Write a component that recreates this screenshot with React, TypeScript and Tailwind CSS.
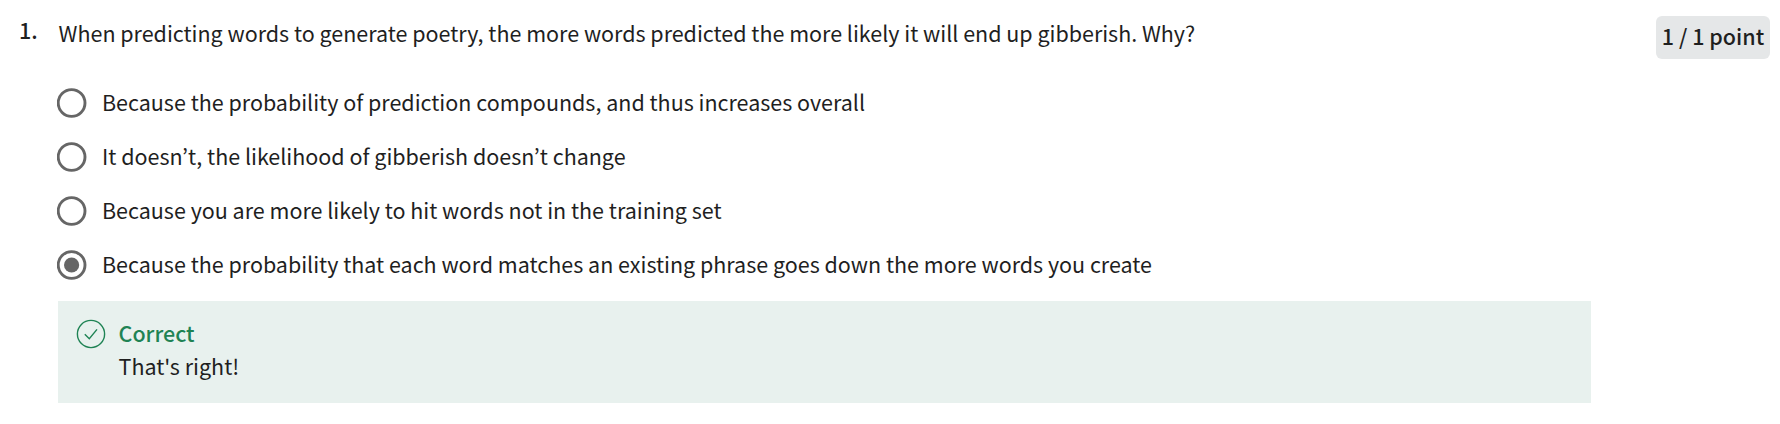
const options = [
  { text: 'Because the probability of prediction compounds, and thus increases overall' },
  { text: 'It doesn’t, the likelihood of gibberish doesn’t change' },
  { text: 'Because you are more likely to hit words not in the training set' },
  {
    text: 'Because the probability that each word matches an existing phrase goes down the more words you create',
    checked: true,
  },
];

function Radio({ checked }: { checked?: boolean }) {
  return (
    <svg viewBox="0 0 30 30" className="size-[30px] shrink-0" fill="none">
      <circle cx="14.6" cy="15" r="13.4" stroke="#666" strokeWidth="2.9" />
      {checked && <circle cx="14.6" cy="15" r="7.6" fill="#666" />}
    </svg>
  );
}

export default function App() {
  return (
    <main className="flex h-[424px] w-[1780px] items-start overflow-hidden bg-white font-['Noto_Sans_CJK_JP','Noto_Sans_CJK_SC',sans-serif] text-[21.5px] leading-[32px] whitespace-nowrap text-[#1f1f1f]">
      <div className="w-[58px] shrink-0 pt-[14px] pl-[19px] font-medium">1.</div>
      <div className="w-[1533px] shrink-0">
        <p className="pt-[17px] pl-[0.6px] tracking-[-0.014px]">
          When predicting words to generate poetry, the more words predicted the more likely it will end up gibberish. Why?
        </p>
        <div className="-ml-px mt-[27px]">
          {options.map((o) => (
            <label key={o.text} className="flex h-[54px] items-center gap-[15px]">
              <Radio checked={o.checked} />
              <span className="pb-[2px] tracking-[-0.01px]">{o.text}</span>
            </label>
          ))}
        </div>
        <div className="mt-[9px] flex h-[102px] items-start bg-[#e8f1ee] pt-[15px] pl-[18px]">
          <svg viewBox="0 0 30 30" className="mt-[3px] size-[30px] shrink-0" fill="none" stroke="#1f8354" strokeWidth="1.4">
            <circle cx="15" cy="15" r="13.6" />
            <path d="M8.8 15.3l4.5 4.5 7.7-9.4" />
          </svg>
          <div className="pl-[12.5px] leading-[33px]">
            <div className="font-medium text-[#1f8354]">Correct</div>
            <div>That's right!</div>
          </div>
        </div>
      </div>
      <div className="mt-4 ml-[65px] flex h-[43px] w-[114px] items-center justify-center rounded-[6px] bg-[#e5e7e8] pb-[4px] font-medium">
        1 / 1 point
      </div>
    </main>
  );
}
